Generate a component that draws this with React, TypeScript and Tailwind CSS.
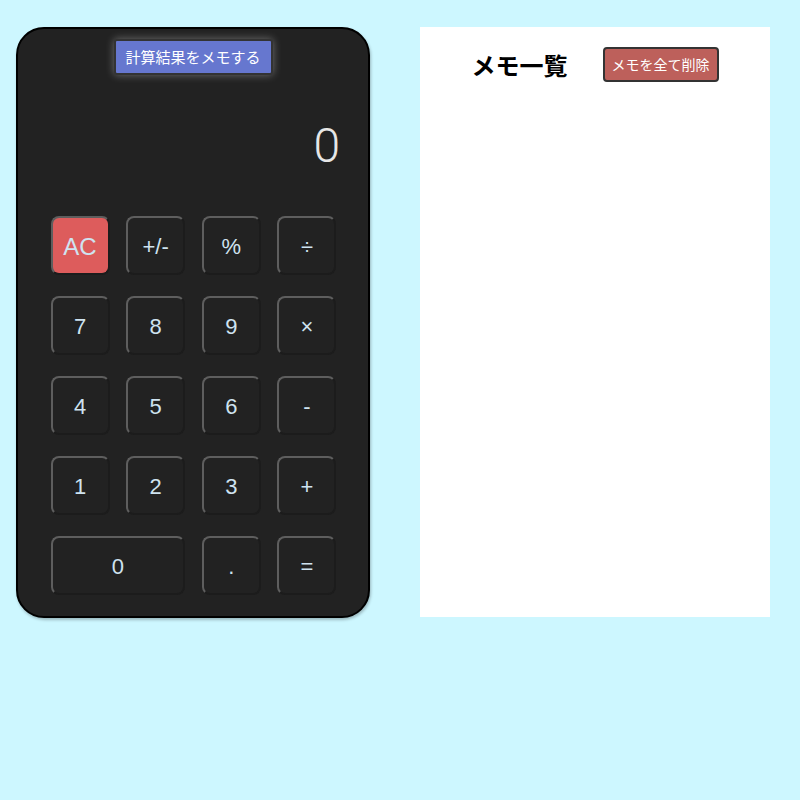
import React from "react";

const keys: { label: string; span?: boolean; ac?: boolean }[] = [
  { label: "AC", ac: true },
  { label: "+/-" },
  { label: "%" },
  { label: "÷" },
  { label: "7" },
  { label: "8" },
  { label: "9" },
  { label: "×" },
  { label: "4" },
  { label: "5" },
  { label: "6" },
  { label: "-" },
  { label: "1" },
  { label: "2" },
  { label: "3" },
  { label: "+" },
  { label: "0", span: true },
  { label: "." },
  { label: "=" },
];

export default function App() {
  return (
    <div
      className="min-h-[800px] w-[800px] bg-[#cdf7ff] flex items-start gap-[50px] pl-[16px] pt-[27px]"
      style={{ fontFamily: '"Liberation Sans", "Noto Sans CJK JP", sans-serif' }}
    >
      <div className="w-[354px] h-[591px] bg-[#222222] border-2 border-black rounded-[28px] flex flex-col items-center pt-[10px] shadow-[1px_2px_3px_rgba(0,0,0,0.25)]">
        <button
          className="h-[36px] w-[159px] bg-[#6677cf] border-2 border-[#333] rounded-[3px] text-white text-[15px] shadow-[0_0_8px_rgba(255,255,255,0.35)]"
          style={{ fontFamily: '"Noto Sans CJK JP", sans-serif' }}
        >
          計算結果をメモする
        </button>
        <div className="w-full h-[141px] flex items-center justify-end pr-[28px]">
          <span
            className="text-[48px] leading-none text-[#e6e6e6] font-light"
            style={{ fontFamily: 'Roboto, sans-serif' }}
          >
            0
          </span>
        </div>
        <div className="grid grid-cols-[repeat(4,59px)] auto-rows-[59px] gap-x-[16.67px] gap-y-[21px] ml-[1px]">
          {keys.map((k) => (
            <button
              key={k.label}
              className={
                "rounded-[8px] border-2 border-t-[#5e5e5e] border-l-[#5e5e5e] border-r-[#1c1c1c] border-b-[#1c1c1c] flex items-center justify-center pt-[2px] text-[#cfe3f0] " +
                (k.ac ? "bg-[#dd5c5c] text-[24px] " : "bg-[#222222] text-[22px] ") +
                (k.span ? "col-span-2" : "")
              }
            >
              {k.label}
            </button>
          ))}
        </div>
      </div>
      <div className="w-[350px] h-[590px] bg-white flex justify-center items-start gap-[35px] pt-[20px]">
        <h2
          className="text-[24px] font-bold text-black h-[35px] flex items-center"
          style={{ fontFamily: '"Noto Sans CJK JP", sans-serif' }}
        >
          メモ一覧
        </h2>
        <button
          className="h-[35px] px-[7px] bg-[#bd605b] border-2 border-[#333] rounded-[4px] text-white text-[14px]"
          style={{ fontFamily: '"Noto Sans CJK JP", sans-serif' }}
        >
          メモを全て削除
        </button>
      </div>
    </div>
  );
}
